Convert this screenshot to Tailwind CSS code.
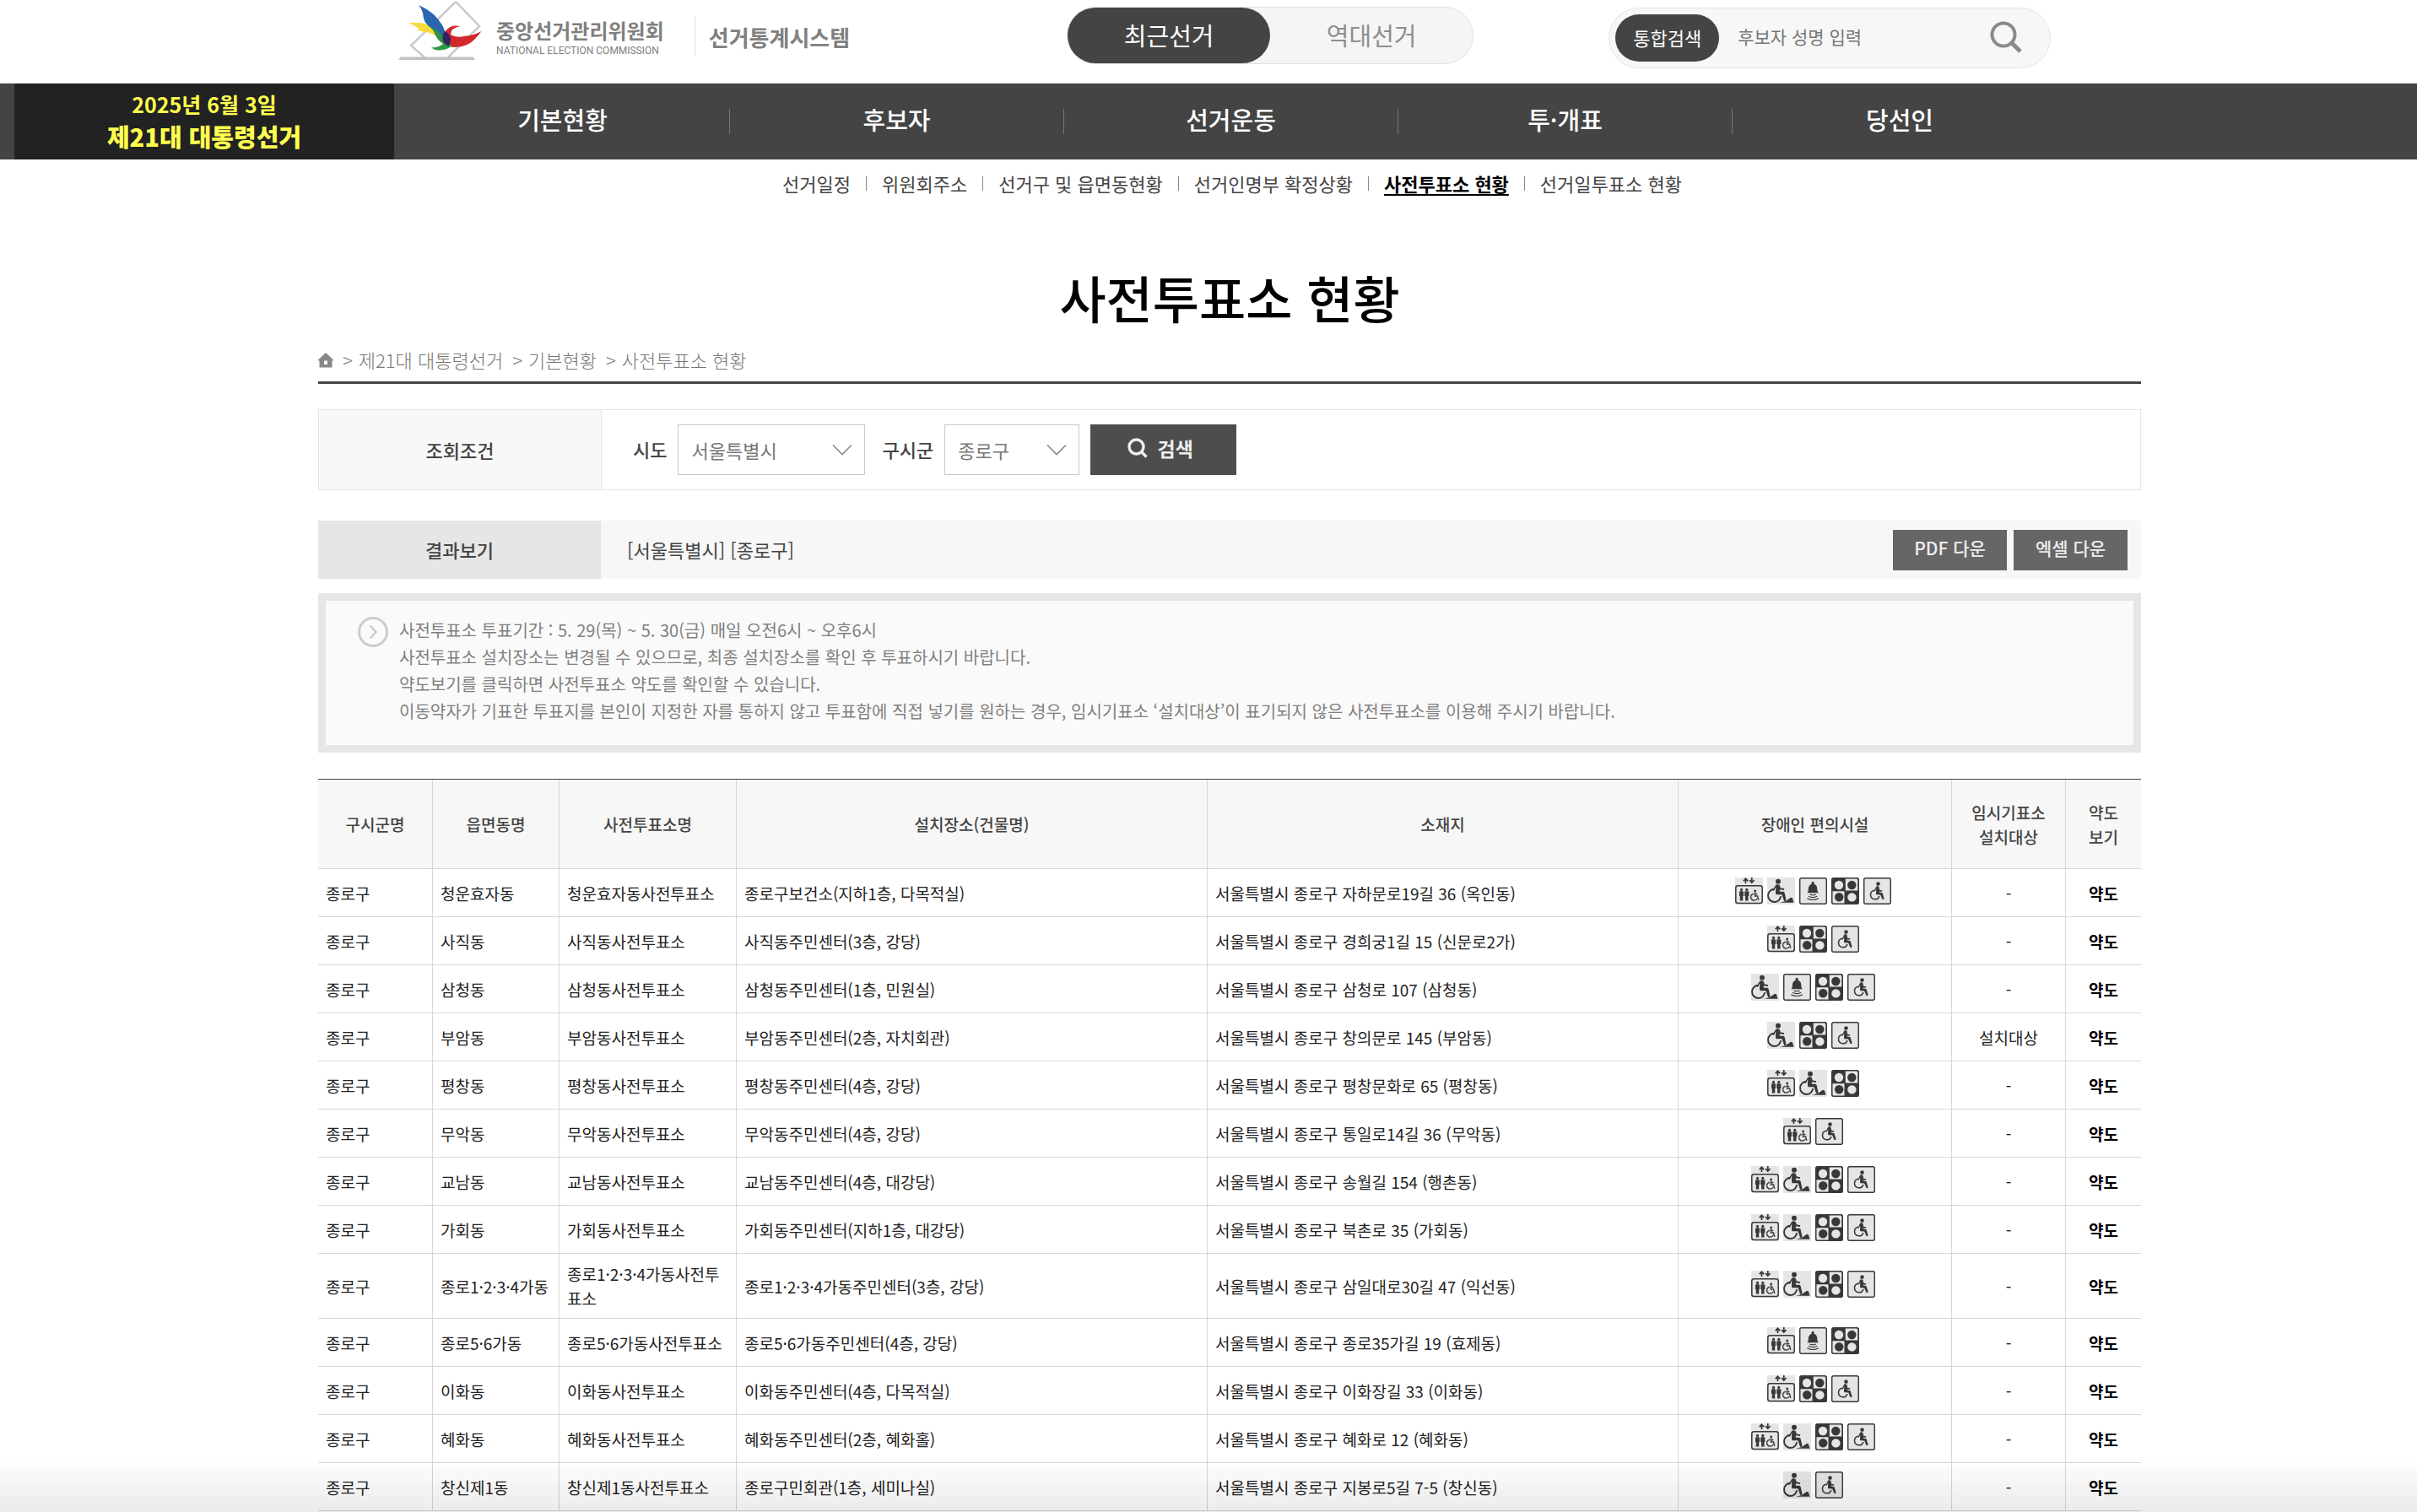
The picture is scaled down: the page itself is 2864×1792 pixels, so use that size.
<!DOCTYPE html>
<html lang="ko">
<head>
  <meta charset="UTF-8" />
  <meta name="viewport" content="width=device-width, initial-scale=1.0" />
  <title>사전투표소 현황 - 선거통계시스템</title>
  <script src="https://cdn.jsdelivr.net/npm/@tailwindcss/browser@4"></script>
</head>
<body class="bg-white h-screen overflow-hidden font-['Noto_Sans_CJK_KR','Noto_Sans',sans-serif] text-[22px] text-[#444]">

  <!-- 아이콘 모음 -->
  <svg class="hidden">
    <symbol id="icon-elevator" viewBox="0 0 33 32">
      <rect width="33" height="32" fill="#e5e5e5" />
      <path d="M12.5 7V2M9.8 4.2 12.5 1.2 15.2 4.2M19.8 0V5M17.1 3.2 19.8 6 22.5 3.2" fill="none" stroke="#383838" stroke-width="1.7" />
      <rect x=".8" y="9.8" width="31.4" height="20.6" rx="2.5" fill="#e5e5e5" stroke="#383838" stroke-width="1.5" />
      <g fill="#383838">
        <circle cx="7.5" cy="14.4" r="1.6" />
        <path d="M5 17q0-.8.8-.8h3.4q.8 0 .8.8v5H9.2v5.5H5.8V22H5z" />
        <circle cx="13.8" cy="14.4" r="1.6" />
        <path d="M11.2 17q0-.8.8-.8h3.6q.8 0 .8.8v5h-.9v5.5h-3.4V22h-.9z" />
        <circle cx="23.7" cy="16" r="1.4" />
      </g>
      <path d="M23.5 17.5v4.5h3l1.3 4.8M23.5 19.5h2.8M21.8 19.2a4 4 0 1 0 4.3 5.8" fill="none" stroke="#383838" stroke-width="1.4" />
    </symbol>
    <symbol id="icon-ramp" viewBox="0 0 33 32">
      <rect width="33" height="32" fill="#e5e5e5" />
      <g fill="#383838">
        <circle cx="13" cy="4.8" r="3" />
        <path d="M10.5 8.5q2.8-1 4.5 1l.7 2.8 4.5 1-.3 1.6-5-.6v2.5h4q1.3.2 1.8 1.4l2 9.3-2.6.4-2.6-7.6h-6.3q-1.4-.3-1.2-2l.2-7-2.4 4.6-1.5-.8z" />
        <path d="M15 29.8 22 28l6-4.2 2 .6 1.5 5.4z" />
      </g>
      <path d="M8.6 13.8a7.6 7.6 0 1 0 7.6 8.4" fill="none" stroke="#383838" stroke-width="1.9" />
    </symbol>
    <symbol id="icon-bell" viewBox="0 0 33 32">
      <rect x=".7" y=".7" width="31.6" height="30.6" rx="2" fill="#e5e5e5" stroke="#383838" stroke-width="1.5" />
      <path d="M14.6 5.8q1.5-2.2 3 0v2q3.2 1.2 3.6 4.4l.3 4 1 1.2v.9H9.7v-.9l1-1.2.3-4q.4-3.2 3.6-4.4z" fill="#383838" />
      <path d="M12.5 20q3.6 1.6 7.2 0M11 22.3q5.1 2.6 10.2 0M9.3 24.7q6.8 3.6 13.6 0" fill="none" stroke="#383838" stroke-width="1.1" />
    </symbol>
    <symbol id="icon-braille" viewBox="0 0 33 32">
      <rect width="33" height="32" rx="2.5" fill="#383838" />
      <path d="M16.8 1.5h13q1.5 0 1.5 1.5v12.5H16.8zM1.5 16.3h14v14.3H3q-1.5 0-1.5-1.5z" fill="#e5e5e5" />
      <circle cx="9" cy="9" r="5.2" fill="#e5e5e5" />
      <circle cx="24.3" cy="9" r="5.2" fill="#383838" />
      <circle cx="9.2" cy="23.3" r="5.2" fill="#383838" />
      <circle cx="24.4" cy="23.4" r="5.2" fill="#e5e5e5" />
    </symbol>
    <symbol id="icon-wheelchair" viewBox="0 0 33 32">
      <rect x=".7" y=".7" width="31.6" height="30.6" rx="2" fill="#e5e5e5" stroke="#383838" stroke-width="1.5" />
      <circle cx="17.5" cy="7.6" r="2.3" fill="#383838" />
      <path d="M15.3 10.5q2-.8 3.3.8l.4 3.3 3.4.8-.2 1.3-3.4-.3v1.2l3 .4q.8.2 1 1l1.9 6.5-2.1.7-2.4-5.8-4.4-.1q-1-.2-.8-1.3l.3-5.5-1.5 3-1.2-.6z" fill="#383838" />
      <path d="M13 15.3a5.3 5.3 0 1 0 5.9 6.7" fill="none" stroke="#383838" stroke-width="1.5" />
    </symbol>
    <symbol id="icon-chevron" viewBox="0 0 24 14">
      <path d="M1 1.5 12 12.5 23 1.5" fill="none" stroke="#888" stroke-width="1.6" />
    </symbol>
  </svg>

  <header>
    <div class="h-[98px] flex items-start pl-[472px]">
      <a href="#" class="flex items-center h-[86px] text-[#808080]">
        <svg class="w-[100px] h-[74px] self-start" viewBox="2 0 100 74">
          <path d="M70 2 98 31 61 68M33 68 17 54 70 2" fill="none" stroke="#c9cacd" stroke-width="2.5" />
          <path d="M5 67.5H91L93 71H2z" fill="#c0c1c5" />
          <path d="M14 27.2Q30 25.5 43 31.5 53 36 58 47L54 50Q46 40 37 38.5 28 37 23.5 35.5L27 34Q21 30 14 27.2z" fill="#f7dc3e" />
          <path d="M26 6Q42 13 50 24 57 33 58.5 42 61 49 61 55 52 52 48 42 45 36 38 31 32 26 31.5 19 31 12 26 6z" fill="#2a67b0" />
          <path d="M40 32Q50 35 57 46L59 54Q50 50 46 42 44 36 40 32z" fill="#2f8f4a" />
          <path d="M75.5 31Q64 28.5 58.5 36 54 43 55 49 59 56 69 56 84 55 91 48 97 42 100.5 37 92 42 80 43 70 45 64 41 64 33 75.5 31z" fill="#d2282c" />
          <path d="M41 56.5Q52 56 57 50 63 49 65 55 57 60 49 59.5 44 59 41 56.5z" fill="#2f9a45" />
          <path d="M57 37Q63 40 64 46 64 51 61.5 55 55 52 54.5 46 54 41 57 37z" fill="#33235f" />
        </svg>
        <span class="ml-4 mt-1 flex flex-col gap-0.5">
          <span class="text-[24px] leading-[28px] font-bold">중앙선거관리위원회</span>
          <span class="font-['Roboto',sans-serif] text-[12px] leading-[16px]">NATIONAL ELECTION COMMISSION</span>
        </span>
        <span class="ml-9 w-px h-[46px] bg-[#ddd]"></span>
        <span class="ml-4 text-[26px] font-bold">선거통계시스템</span>
      </a>
      <div class="ml-[257px] mt-2 w-[482px] h-[68px] flex rounded-full border border-[#e2e2e2] bg-[#f5f5f5] text-[29px]">
        <button class="w-[240px] rounded-full bg-[#444] text-white">최근선거</button>
        <button class="flex-1 text-[#8e8e8e]">역대선거</button>
      </div>
      <form class="ml-[160px] mt-[9px] w-[524px] h-[72px] pl-[7px] flex items-center rounded-full border border-[#e5e5e5] bg-[#f7f7f7]">
        <label for="candidateName" class="w-[123px] h-14 rounded-full bg-[#444] text-white text-center leading-[54px]">통합검색</label>
        <input type="text" id="candidateName" placeholder="후보자 성명 입력"
               class="ml-[22px] w-[290px] pb-0.5 text-[21px] placeholder:text-[#757575] focus:outline-none" />
        <button type="button" aria-label="검색" class="ml-2">
          <svg class="w-10 h-10" viewBox="0 0 40 40" fill="none" stroke="#8a8a8a" stroke-width="4">
            <circle cx="17" cy="16" r="13.5" />
            <path d="M26.500 25.5 37 36" stroke-width="5" />
          </svg>
        </button>
      </form>
    </div>

    <nav class="h-[91px] border-t border-[#e5e5e5] bg-[#444] pl-[17px] flex text-[29px] font-medium text-white">
      <a href="#" class="w-[450px] pb-1 bg-[#222] flex flex-col items-center justify-center text-[#ffff4f] font-bold">
        <span class="text-[25px] leading-[38px]">2025년 6월 3일</span>
        <strong class="leading-[38px]">제21대 대통령선거</strong>
      </a>
      <ul id="mainMenu" class="ml-0.5 flex items-center"></ul>
    </nav>
  </header>

  <div class="pl-[50px]">
    <ul id="subMenu" class="flex items-center justify-center pt-3 pl-[6px] leading-[33px]"></ul>

    <main class="w-full max-w-[2160px] mx-auto">
      <h1 class="mt-[73px] text-[60px] leading-[90px] font-medium text-black text-center">사전투표소 현황</h1>

      <div class="mt-2 h-[50px] pb-1 flex items-center gap-[7px] border-b-3 border-[#444] font-light text-[#777]">
        <a href="#" aria-label="홈" class="mr-1">
          <svg class="w-[18px] h-[18px]" viewBox="0 0 18 18">
            <path d="M9 0 18 8.5V9.5H16.5V17.5H1.5V9.5H0V8.5zM7 9.5V14H11V9.5z" fill="#888" fill-rule="evenodd" />
          </svg>
        </a>
        <span>&gt;</span><a href="#" class="mr-1">제21대 대통령선거</a>
        <span>&gt;</span><a href="#" class="mr-1">기본현황</a>
        <span>&gt;</span><a href="#">사전투표소 현황</a>
      </div>

      <form class="mt-[30px] h-24 flex items-stretch border border-[#e5e5e5]">
        <div class="w-[335px] flex items-center justify-center border-r border-[#e5e5e5] bg-[#f8f8f8] font-medium">조회조건</div>
        <div class="flex-1 flex items-center pl-[37px]">
          <label for="city" class="pb-0.5 font-medium">시도</label>
          <div class="relative ml-[13px]">
            <select id="city" class="w-[222px] h-[60px] appearance-none border border-[#c8c8c8] bg-white pl-[15px] text-[#777]">
              <option>서울특별시</option>
            </select>
            <svg class="absolute right-[15px] top-[23px] w-6 h-3.5 pointer-events-none"><use href="#icon-chevron" /></svg>
          </div>
          <label for="town" class="ml-5 pb-0.5 font-medium">구시군</label>
          <div class="relative ml-[13px]">
            <select id="town" class="w-[160px] h-[60px] appearance-none border border-[#c8c8c8] bg-white pl-[15px] text-[#777]">
              <option>종로구</option>
            </select>
            <svg class="absolute right-[15px] top-[23px] w-6 h-3.5 pointer-events-none"><use href="#icon-chevron" /></svg>
          </div>
          <button type="button" class="ml-[13px] w-[173px] h-[60px] pb-1 pr-2 flex items-center justify-center gap-3 bg-[#4d4d4d] text-[23px] font-bold text-[#eee]">
            <svg class="w-6 h-6" viewBox="0 0 24 24" fill="none" stroke="#eee" stroke-width="3.4">
              <circle cx="10.5" cy="10.5" r="8.5" />
              <path d="M16.5 16.5 22.5 22.5" />
            </svg>
            검색
          </button>
        </div>
      </form>

      <div class="mt-9 h-[69px] flex items-center bg-[#f7f7f7]">
        <div class="w-[335px] self-stretch flex items-center justify-center bg-[#e6e6e6] font-medium">결과보기</div>
        <div class="flex-1 pl-[31px]">[서울특별시] [종로구]</div>
        <div class="flex gap-2 pr-4 text-[21px] font-medium text-[#eee]">
          <button class="w-[135px] h-12 pb-1 bg-[#666]">PDF 다운</button>
          <button class="w-[135px] h-12 pb-1 bg-[#666]">엑셀 다운</button>
        </div>
      </div>

      <div class="mt-[17px] border-9 border-[#e6e6e6] bg-[#fafafa] flex items-start pt-[19px] pl-[38px] pb-[24px]">
        <svg class="w-9 h-9" viewBox="0 0 36 36" fill="none" stroke="#ccc" stroke-width="3">
          <circle cx="18" cy="18" r="16.5" />
          <path d="M14.5 10.5 21.5 18 14.5 25.5" stroke-width="2.5" />
        </svg>
        <p class="ml-[13px] text-[20px] leading-8 text-[#808080]">
          사전투표소 투표기간 : 5. 29(목) ~ 5. 30(금) 매일 오전6시 ~ 오후6시<br />
          사전투표소 설치장소는 변경될 수 있으므로, 최종 설치장소를 확인 후 투표하시기 바랍니다.<br />
          약도보기를 클릭하면 사전투표소 약도를 확인할 수 있습니다.<br />
          이동약자가 기표한 투표지를 본인이 지정한 자를 통하지 않고 투표함에 직접 넣기를 원하는 경우, 임시기표소 ‘설치대상’이 표기되지 않은 사전투표소를 이용해 주시기 바랍니다.
        </p>
      </div>

      <table class="mt-[31px] w-full table-fixed border-separate border-spacing-0 border-t border-[#444] text-[19px] leading-[29px] text-[#222]">
        <colgroup>
          <col class="w-[135px]" />
          <col class="w-[150px]" />
          <col class="w-[210px]" />
          <col class="w-[558px]" />
          <col class="w-[558px]" />
          <col class="w-[324px]" />
          <col class="w-[135px]" />
          <col class="w-[90px]" />
        </colgroup>
        <thead class="bg-[#f7f7f7] text-[#444] [&_th]:h-[106px] [&_th]:font-medium [&_th]:border-b [&_th]:border-l [&_th]:border-[#d7d7d7] [&_th:first-child]:border-l-0">
          <tr>
            <th>구시군명</th>
            <th>읍면동명</th>
            <th>사전투표소명</th>
            <th>설치장소(건물명)</th>
            <th>소재지</th>
            <th>장애인 편의시설</th>
            <th>임시기표소<br />설치대상</th>
            <th>약도<br />보기</th>
          </tr>
        </thead>
        <tbody id="stations" class="[&_td]:h-[57px] [&_td]:px-[9px] [&_td]:border-b [&_td]:border-l [&_td]:border-[#d7d7d7] [&_td:first-child]:border-l-0"></tbody>
      </table>
    </main>
  </div>

  <div class="fixed inset-x-0 bottom-0 h-16 bg-linear-to-t from-black/8 to-transparent pointer-events-none"></div>

  <script>
    const mainMenu = ['기본현황', '후보자', '선거운동', '투·개표', '당선인'];
    document.getElementById('mainMenu').innerHTML = mainMenu.map(m => `
      <li class="w-[396px] h-[30px] flex items-center justify-center border-r border-[#777] last:border-r-0"><a href="#" class="pb-1">${m}</a></li>
    `).join('');

    const subMenu = ['선거일정', '위원회주소', '선거구 및 읍면동현황', '선거인명부 확정상황', '사전투표소 현황', '선거일투표소 현황'];
    const current = '사전투표소 현황';
    document.getElementById('subMenu').innerHTML = subMenu.map(m => `
      <li class="flex items-center">
        <a href="#" class="${m === current ? 'font-bold text-black underline decoration-2 underline-offset-3' : 'text-[#444]'}">${m}</a>
      </li>
    `).join('<li class="mx-[18px] w-px h-[17px] bg-[#888]"></li>');

    // E: 승강기, R: 경사로, B: 호출벨, D: 점자유도블록, W: 장애인 화장실
    const icons = {
      E: ['icon-elevator', '승강기'],
      R: ['icon-ramp', '경사로'],
      B: ['icon-bell', '호출벨'],
      D: ['icon-braille', '점자유도블록'],
      W: ['icon-wheelchair', '장애인 화장실']
    };
    const stations = [
      ['청운효자동', '종로구보건소(지하1층, 다목적실)', '자하문로19길 36 (옥인동)', 'ERBDW', '-'],
      ['사직동', '사직동주민센터(3층, 강당)', '경희궁1길 15 (신문로2가)', 'EDW', '-'],
      ['삼청동', '삼청동주민센터(1층, 민원실)', '삼청로 107 (삼청동)', 'RBDW', '-'],
      ['부암동', '부암동주민센터(2층, 자치회관)', '창의문로 145 (부암동)', 'RDW', '설치대상'],
      ['평창동', '평창동주민센터(4층, 강당)', '평창문화로 65 (평창동)', 'ERD', '-'],
      ['무악동', '무악동주민센터(4층, 강당)', '통일로14길 36 (무악동)', 'EW', '-'],
      ['교남동', '교남동주민센터(4층, 대강당)', '송월길 154 (행촌동)', 'ERDW', '-'],
      ['가회동', '가회동주민센터(지하1층, 대강당)', '북촌로 35 (가회동)', 'ERDW', '-'],
      ['종로1·2·3·4가동', '종로1·2·3·4가동주민센터(3층, 강당)', '삼일대로30길 47 (익선동)', 'ERDW', '-'],
      ['종로5·6가동', '종로5·6가동주민센터(4층, 강당)', '종로35가길 19 (효제동)', 'EBD', '-'],
      ['이화동', '이화동주민센터(4층, 다목적실)', '이화장길 33 (이화동)', 'EDW', '-'],
      ['혜화동', '혜화동주민센터(2층, 혜화홀)', '혜화로 12 (혜화동)', 'ERDW', '-'],
      ['창신제1동', '종로구민회관(1층, 세미나실)', '지봉로5길 7-5 (창신동)', 'RW', '-']
    ];
    document.getElementById('stations').innerHTML = stations.map(([dong, place, address, facilities, booth]) => `
      <tr>
        <td>종로구</td>
        <td class="whitespace-nowrap">${dong}</td>
        <td class="py-[9px]">${dong}사전투표소</td>
        <td>${place}</td>
        <td>서울특별시 종로구 ${address}</td>
        <td>
          <div class="flex justify-center gap-[5px] pr-[5px] pb-[5px]">
            ${[...facilities].map(f => `<svg class="w-[33px] h-8" role="img" aria-label="${icons[f][1]}"><use href="#${icons[f][0]}" /></svg>`).join('')}
          </div>
        </td>
        <td class="text-center">${booth}</td>
        <td class="text-center"><a href="#" class="font-bold text-black">약도</a></td>
      </tr>
    `).join('');
  </script>
</body>
</html>
